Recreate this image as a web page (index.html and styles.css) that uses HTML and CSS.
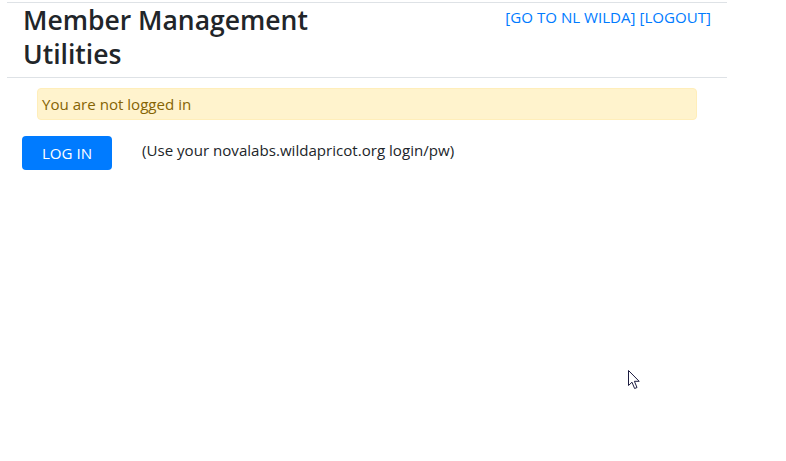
FILE: index.html
```html
<!DOCTYPE html>
<html lang="en">
<head>
<meta charset="utf-8">
<title>Member Management Utilities</title>
<link rel="stylesheet" href="styles.css">
</head>
<body>
<div class="page">
  <header class="header">
    <h3 class="title">Member Management Utilities</h3>
    <nav class="links"><a href="#">[GO TO NL WILDA]</a> <a href="#">[LOGOUT]</a></nav>
  </header>
  <div class="alert">You are not logged in</div>
  <div class="login-row">
    <button class="btn">LOG IN</button>
    <span class="hint">(Use your novalabs.wildapricot.org login/pw)</span>
  </div>
</div>
<svg class="cursor" width="13" height="20" viewBox="0 0 13 20"><path d="M0.5 0.5 L0.5 15.5 L4 12.2 L6.6 18.5 L9 17.5 L6.4 11.3 L11.2 11.3 Z" fill="#fff" stroke="#1c1c40" stroke-width="1" stroke-linejoin="miter"/></svg>
</body>
</html>
```
FILE: styles.css
```css
html, body {
  margin: 0;
  padding: 0;
  background: #fff;
}
body {
  font-family: "Open Sans", "Noto Sans", sans-serif;
  font-size: 15.1px;
  line-height: 24px;
  color: #212529;
}
.page {
  width: 720px;
  margin-left: 7px;
  padding-top: 2px;
}
.header {
  display: flex;
  justify-content: space-between;
  align-items: flex-start;
  border-top: 1px solid #dee2e6;
  border-bottom: 1px solid #dee2e6;
  padding: 1px 16px 6px 16px;
}
.title {
  margin: 0;
  width: 330px;
  font-size: 26.5px;
  line-height: 33.6px;
  font-weight: 600;
  color: #212529;
}
.links {
  padding-top: 1px;
}
.links a {
  color: #007bff;
  text-decoration: none;
}
.alert {
  margin: 10px 30px 0 30px;
  padding: 3px 4px;
  background: #fff3cd;
  border: 1px solid #ffeeba;
  border-radius: 4px;
  color: #856404;
}
.login-row {
  display: flex;
  align-items: center;
  margin: 16px 0 0 15px;
}
.btn {
  width: 90px;
  height: 34px;
  background: #007bff;
  color: #fff;
  border: none;
  border-radius: 4px;
  font-family: inherit;
  font-size: 15.1px;
  padding: 0;
}
.hint {
  margin-left: 30px;
  position: relative;
  top: -3px;
}
.cursor {
  position: absolute;
  left: 628px;
  top: 370px;
}
```
